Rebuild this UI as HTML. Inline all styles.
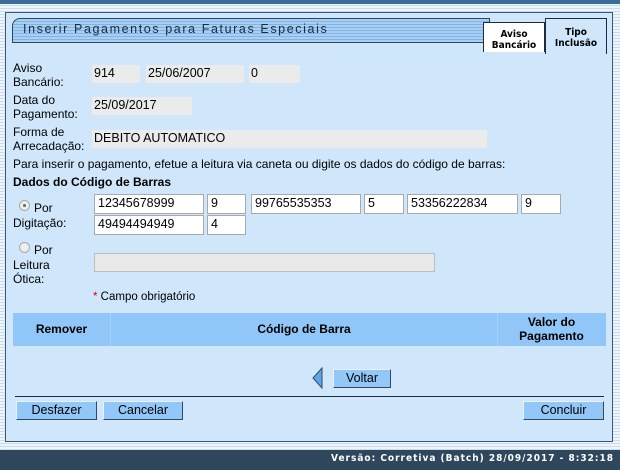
<!DOCTYPE html>
<html><head><meta charset="utf-8"><style>
*{margin:0;padding:0;box-sizing:border-box}
body{width:620px;height:470px;overflow:hidden;position:relative;font-family:"Liberation Sans",Arial,sans-serif;font-size:12px;color:#000;
background:repeating-linear-gradient(180deg,#eef4fb 0,#eef4fb 2px,#c9dcee 2px,#c9dcee 3px)}
.a{position:absolute}
#top{left:0;top:0;width:620px;height:4px;background:#3d6a98}
#panel{left:5px;top:12px;width:608px;height:430px;background:#cfe6fb;border:1px solid #3b5670}
#title{left:12px;top:18px;width:478px;height:25px;border:1px solid #2c4660;border-radius:8px 0 0 0;
background:repeating-linear-gradient(180deg,#a9cff3 0,#a9cff3 2px,#7fb2e6 2px,#7fb2e6 3px);color:#1d2c3c;letter-spacing:1.6px;font-size:12.5px;padding:3px 0 0 10px}
.tab{top:20px;height:34px;border:1px solid #1d2c3c;border-bottom:none;font-family:"DejaVu Sans Condensed","DejaVu Sans",sans-serif;font-weight:bold;font-size:10px;line-height:11px;text-align:center;padding-top:8px;transform-origin:top}
.f{position:absolute;background:#ebebeb;height:18px;padding:1px 2px;font-size:12.5px}
.i{position:absolute;background:#fff;border:1px solid #a9a9a9;height:20px;padding:1px 3px;font-size:12.5px}
.lb{position:absolute;line-height:14px}
.radio{position:absolute;width:11px;height:11px;border-radius:50%;border:1px solid #a8a8a8;background:#eee}
.btn{position:absolute;height:19px;background:#92c7f7;border:1px solid #2f4a63;border-top-color:#e6f2fd;border-left-color:#e6f2fd;text-align:center;font-size:12.5px;line-height:17px}
th{font-weight:bold}
</style></head><body>
<div class="a" id="top"></div>
<div class="a" id="panel"></div>
<div class="a" id="title">Inserir Pagamentos para Faturas Especiais</div>
<div class="a tab" style="left:483px;width:62px;background:#fff;top:22px;height:30px;padding-top:6px;border-radius:0">Aviso<br>Bancário</div>
<div class="a tab" style="left:545px;width:62px;background:#cfe6fb;top:18px;height:36px">Tipo<br>Inclusão</div>
<div class="lb" style="left:13px;top:61px">Aviso<br>Bancário:</div>
<div class="f" style="left:92px;top:65px;width:48px">914</div>
<div class="f" style="left:146px;top:65px;width:98px">25/06/2007</div>
<div class="f" style="left:249px;top:65px;width:51px">0</div>
<div class="lb" style="left:13px;top:93px">Data do<br>Pagamento:</div>
<div class="f" style="left:92px;top:97px;width:100px">25/09/2017</div>
<div class="lb" style="left:13px;top:125px">Forma de<br>Arrecadação:</div>
<div class="f" style="left:92px;top:130px;width:395px">DEBITO AUTOMATICO</div>
<div class="lb" style="left:13px;top:157px">Para inserir o pagamento, efetue a leitura via caneta ou digite os dados do código de barras:</div>
<div class="lb" style="left:13px;top:175px;font-weight:bold">Dados do Código de Barras</div>
<div class="i" style="left:94px;top:194px;width:110px">12345678999</div>
<div class="i" style="left:207px;top:194px;width:39px">9</div>
<div class="i" style="left:251px;top:194px;width:110px">99765535353</div>
<div class="i" style="left:364px;top:194px;width:40px">5</div>
<div class="i" style="left:407px;top:194px;width:111px">53356222834</div>
<div class="i" style="left:521px;top:194px;width:40px">9</div>
<div class="i" style="left:94px;top:215px;width:110px">49494494949</div>
<div class="i" style="left:207px;top:215px;width:39px">4</div>
<div class="radio" style="left:19px;top:200px"><div style="position:absolute;left:3px;top:3px;width:3px;height:3px;border-radius:50%;background:#666"></div></div>
<div class="lb" style="left:34px;top:201px">Por</div>
<div class="lb" style="left:13px;top:216px">Digitação:</div>
<div class="radio" style="left:19px;top:242px"></div>
<div class="lb" style="left:34px;top:243px">Por<br></div>
<div class="lb" style="left:13px;top:258px">Leitura<br>Ótica:</div>
<div class="f" style="left:94px;top:253px;width:341px;height:19px;border:1px solid #bcbcbc;background:#e8e8e8"></div>
<div class="lb" style="left:93px;top:290px;font-size:11.5px"><span style="color:#d00">*</span> Campo obrigatório</div>
<div class="a" style="left:13px;top:313px;width:593px;height:33px;background:#90c6f8"></div>
<div class="a" style="left:110px;top:313px;width:1px;height:33px;background:#a6d2fa"></div>
<div class="a" style="left:497px;top:313px;width:1px;height:33px;background:#a6d2fa"></div>
<div class="lb" style="left:13px;top:322px;width:97px;text-align:center;font-weight:bold">Remover</div>
<div class="lb" style="left:111px;top:322px;width:386px;text-align:center;font-weight:bold">Código de Barra</div>
<div class="lb" style="left:498px;top:315px;width:107px;text-align:center;font-weight:bold">Valor do<br>Pagamento</div>
<svg class="a" style="left:312px;top:367px" width="12" height="22"><polygon points="10,1 10,21 1,11" fill="#5fa6e8" stroke="#2f4a63" stroke-width="1"/></svg>
<div class="btn" style="left:333px;top:369px;width:58px">Voltar</div>
<div class="a" style="left:15px;top:396px;width:589px;height:1px;background:#1d2c3c"></div>
<div class="btn" style="left:16px;top:401px;width:81px">Desfazer</div>
<div class="btn" style="left:103px;top:401px;width:80px">Cancelar</div>
<div class="btn" style="left:523px;top:401px;width:81px">Concluir</div>
<div class="a" style="left:0;top:450px;width:620px;height:20px;background:#2e475d;color:#fff;font-family:'DejaVu Sans Condensed','DejaVu Sans',sans-serif;font-weight:bold;font-size:10px;letter-spacing:1px;text-align:right;padding:3px 6px 0 0">Versão: Corretiva (Batch) 28/09/2017 - 8:32:18</div>
</body></html>
